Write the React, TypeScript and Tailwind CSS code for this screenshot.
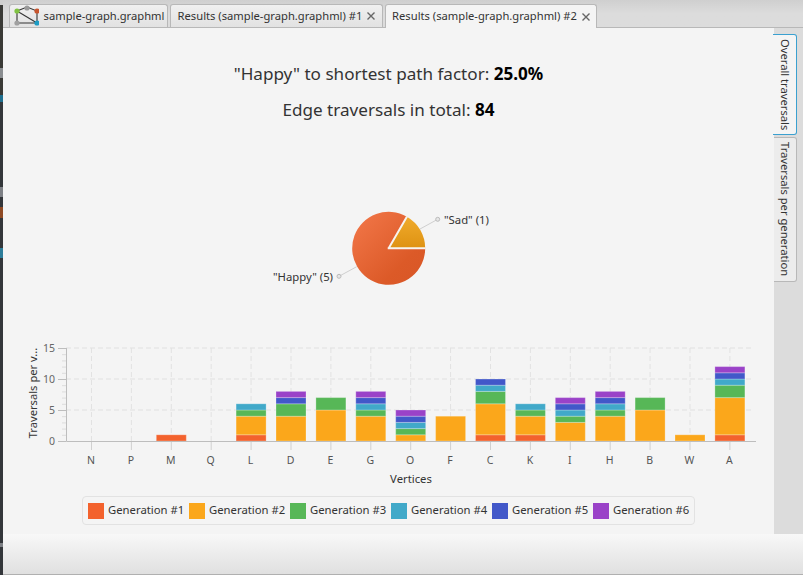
import React from 'react';

const COLORS = ['#f3622d', '#fba71b', '#57b757', '#41a9c9', '#4258c9', '#9a42c8'];

const VERTICES: [string, number[]][] = [
  ['N', []],
  ['P', []],
  ['M', [1]],
  ['Q', []],
  ['L', [1, 3, 1, 1]],
  ['D', [0, 4, 2, 0, 1, 1]],
  ['E', [0, 5, 2]],
  ['G', [0, 4, 1, 1, 1, 1]],
  ['O', [0, 1, 1, 1, 1, 1]],
  ['F', [0, 4]],
  ['C', [1, 5, 2, 1, 1]],
  ['K', [1, 3, 1, 1]],
  ['I', [0, 3, 1, 1, 1, 1]],
  ['H', [0, 4, 1, 1, 1, 1]],
  ['B', [0, 5, 2]],
  ['W', [0, 1]],
  ['A', [1, 6, 2, 1, 1, 1]],
];

const UNIT = 6.2;
const BASE = 441;

function GraphIcon() {
  return (
    <svg width="26" height="22" viewBox="0 0 26 22" className="shrink-0">
      <g stroke="#333" strokeWidth="1.1" fill="none">
        <path d="M4 6 L14 2 L24 6 L24 18 L4 18 Z" />
        <path d="M4 6 L24 18" />
      </g>
      <circle cx="14" cy="3" r="2.6" fill="#9a9a9a" />
      <circle cx="4" cy="6" r="2.6" fill="#7fc241" />
      <circle cx="24" cy="6" r="2.6" fill="#c8552d" />
      <circle cx="4" cy="18" r="2.6" fill="#a0a0a0" />
      <circle cx="24" cy="18" r="2.6" fill="#1e9cc4" />
    </svg>
  );
}

function CloseIcon() {
  return (
    <svg width="8" height="8" viewBox="0 0 8 8" className="shrink-0">
      <path d="M0.5 0.5 L7.5 7.5 M7.5 0.5 L0.5 7.5" stroke="#666" strokeWidth="1.4" />
    </svg>
  );
}

function Tab({ label, selected, closable, icon, width }: { label: string; selected?: boolean; closable?: boolean; icon?: boolean; width: string }) {
  return (
    <div
      className={`${width} flex items-center justify-center gap-[5px] rounded-t-[3px] border border-b-0 border-[#b8b8b8] text-[11.2px] text-[#333] whitespace-nowrap ${
        selected ? 'bg-[#f4f4f4] relative z-10 h-[24px] -mb-px' : 'h-[23px] bg-gradient-to-b from-[#f0f0f0] to-[#e2e2e2]'
      }`}
    >
      {icon && <GraphIcon />}
      <span>{label}</span>
      {closable && <CloseIcon />}
    </div>
  );
}

function PieChart() {
  return (
    <svg width="771" height="100" viewBox="3 200 771 100" className="block">
      <defs>
        <linearGradient id="happy" x1="0" y1="0" x2="1" y2="1">
          <stop offset="0" stopColor="#f3784a" />
          <stop offset="0.7" stopColor="#dc5a28" />
          <stop offset="1" stopColor="#d85626" />
        </linearGradient>
        <linearGradient id="sad" x1="0" y1="0" x2="0" y2="1">
          <stop offset="0" stopColor="#f0ab2c" />
          <stop offset="1" stopColor="#de9212" />
        </linearGradient>
      </defs>
      <path d="M420 229 L437.7 219.3" stroke="#cfcfcf" strokeWidth="1" />
      <path d="M356.7 266.7 L339 276.3" stroke="#cfcfcf" strokeWidth="1" />
      <circle cx="437.7" cy="219.3" r="2" fill="#e6e6e6" stroke="#bbb" />
      <circle cx="339" cy="276.3" r="2" fill="#e6e6e6" stroke="#bbb" />
      <path d="M388.7 248.3 L406.95 216.7 A36.5 36.5 0 1 0 425.2 248.3 Z" fill="url(#happy)" />
      <path d="M388.7 248.3 L406.95 216.7 A36.5 36.5 0 0 1 425.2 248.3 Z" fill="url(#sad)" />
      <path d="M388.7 248.3 L407 216.6 M387.7 248.3 L425.5 248.3" stroke="#f7f3ee" strokeWidth="2" />
      <text x="444" y="224" fontSize="11.3" fill="#333">"Sad" (1)</text>
      <text x="333" y="281" fontSize="11.3" fill="#333" textAnchor="end">"Happy" (5)</text>
    </svg>
  );
}

function BarChart() {
  const minor: number[] = [];
  for (let i = 1; i < 15; i++) if (i % 5 !== 0) minor.push(i);
  return (
    <svg width="771" height="150" viewBox="3 340 771 150" className="block">
      {[5, 10, 15].map((v) => (
        <line key={v} x1="66" x2="754" y1={BASE - v * UNIT} y2={BASE - v * UNIT} stroke="#e0e0e0" strokeDasharray="5 3" />
      ))}
      {VERTICES.map(([name], i) => (
        <line key={name} x1={91.5 + i * 39.9} x2={91.5 + i * 39.9} y1="348" y2={BASE} stroke="#e2e2e2" strokeDasharray="5 3" />
      ))}
      {VERTICES.map(([name, values], i) => {
        let total = 0;
        return (
          <g key={name}>
            {values.map((v, s) => {
              if (!v) return null;
              const y = BASE - (total + v) * UNIT;
              total += v;
              return (
                <rect key={s} x={76.5 + i * 39.9} y={y} width="30" height={v * UNIT} fill={COLORS[s]} stroke="#ffffff" strokeOpacity="0.25" strokeWidth="1" />
              );
            })}
          </g>
        );
      })}
      <path d="M66.5 348 V441.5 H756" stroke="#bdbdbd" strokeWidth="1" fill="none" />
      {[0, 5, 10, 15].map((v) => (
        <g key={v}>
          <line x1="58" x2="66" y1={BASE - v * UNIT + 0.5} y2={BASE - v * UNIT + 0.5} stroke="#bdbdbd" />
          <text x="55" y={BASE - v * UNIT + 4} fontSize="10.5" fill="#666" textAnchor="end">{v}</text>
        </g>
      ))}
      {minor.map((v) => (
        <line key={v} x1="62" x2="66" y1={BASE - v * UNIT + 0.5} y2={BASE - v * UNIT + 0.5} stroke="#dcdcdc" />
      ))}
      {VERTICES.map(([name], i) => (
        <g key={name}>
          <line x1={91.5 + i * 39.9} x2={91.5 + i * 39.9} y1="442" y2="450" stroke="#d0d0d0" />
          <text x={91 + i * 39.9} y="464" fontSize="10.5" fill="#555" textAnchor="middle">{name}</text>
        </g>
      ))}
      <text x="411" y="483" fontSize="11.3" fill="#333" textAnchor="middle">Vertices</text>
      <text transform="translate(37 393) rotate(-90)" fontSize="11.2" fill="#333" textAnchor="middle">Traversals per v...</text>
    </svg>
  );
}

function Legend() {
  return (
    <div className="ml-[79px] w-[613px] h-[29px] flex items-center pl-[5px] gap-[5px] border border-[#e2e2e2] rounded-[4px] bg-[#f4f4f4]">
      {COLORS.map((c, i) => (
        <div key={c} className="w-[96px] flex items-center gap-[4px] text-[11.3px] text-[#333] whitespace-nowrap">
          <span className="w-[16px] h-[16px] shrink-0" style={{ backgroundColor: c }} />
          <span>Generation #{i + 1}</span>
        </div>
      ))}
    </div>
  );
}

export default function App() {
  return (
    <div className="w-[803px] h-[575px] flex overflow-hidden bg-[#f4f4f4] font-['Noto_Sans',sans-serif]">
      {/* sliver of the window behind */}
      <div className="w-[3px] h-full flex flex-col bg-[#33363a]">
        <div className="h-[5px] bg-[#cfcfcf]" />
        <div className="h-[63px] bg-[#3a3a36]" />
        <div className="h-[10px] bg-[#8a8d90]" />
        <div className="h-[17px] bg-[#3a3a36]" />
        <div className="h-[7px] bg-[#1f6f8f]" />
        <div className="h-[85px]" />
        <div className="h-[10px] bg-[#7d8085]" />
        <div className="h-[10px]" />
        <div className="h-[11px] bg-[#8f4a25]" />
        <div className="h-[30px]" />
        <div className="h-[10px] bg-[#2d7d9a]" />
        <div className="h-[285px]" />
        <div className="h-[4px] bg-[#7d8085]" />
      </div>

      <div className="flex-1 flex flex-col min-w-0">
        <div className="h-[28px] shrink-0 flex items-end gap-[2px] pl-[6px] border-b border-[#b8b8b8] bg-gradient-to-b from-[#cfcfcf] via-[#dcdcdc] to-[#dcdcdc]">
          <Tab label="sample-graph.graphml" icon width="w-[159px]" />
          <Tab label="Results (sample-graph.graphml) #1" closable width="w-[213px]" />
          <Tab label="Results (sample-graph.graphml) #2" closable selected width="w-[212px]" />
        </div>

        <div className="h-[506px] shrink-0 flex">
          <div className="w-[771px] flex flex-col bg-[#f4f4f4]">
            <div className="pt-[33px] flex flex-col items-center gap-[11px] text-[17.1px] leading-[25px] text-[#333]">
              <p>"Happy" to shortest path factor: <b className="text-black">25.0%</b></p>
              <p>Edge traversals in total: <b className="text-black">84</b></p>
            </div>
            <div className="mt-[78px]">
              <PieChart />
            </div>
            <div className="mt-[40px]">
              <BarChart />
            </div>
            <div className="mt-[6px]">
              <Legend />
            </div>
          </div>

          <div className="flex-1 bg-[#dcdcdc] pt-[6px] flex flex-col gap-[2px] items-start">
            <div className="w-[24px] h-[101px] -ml-px flex items-center justify-center bg-[#f4f4f4] border border-l-0 border-[#3aa0d0] rounded-r-[3px] text-[11.2px] text-[#333] [writing-mode:vertical-rl] whitespace-nowrap">
              Overall traversals
            </div>
            <div className="w-[23px] h-[145px] flex items-center justify-center bg-[#ececec] border border-l-0 border-[#b8b8b8] rounded-r-[3px] text-[11.2px] text-[#333] [writing-mode:vertical-rl] whitespace-nowrap">
              Traversals per generation
            </div>
          </div>
        </div>

        <div className="flex-1 bg-gradient-to-b from-[#f8f8f8] to-[#e0e0e0] border-b border-[#b0b0b0]" />
      </div>
    </div>
  );
}
